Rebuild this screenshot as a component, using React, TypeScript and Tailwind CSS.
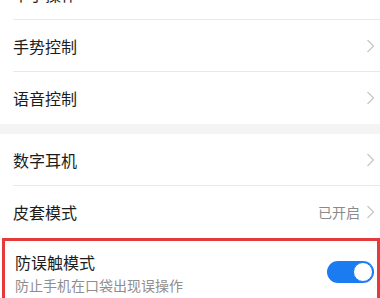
const FONT = { fontFamily: '"Noto Sans CJK SC", "Noto Sans", sans-serif' };

function Chevron() {
  return (
    <svg width="9" height="16" viewBox="0 0 9 16" className="shrink-0">
      <polyline points="1.5,2 7.5,8 1.5,14" fill="none" stroke="#c8c8c8" strokeWidth="1.3" />
    </svg>
  );
}

function Row({ label, value, last }: { label: string; value?: string; last?: boolean }) {
  return (
    <div className="pl-[13px]">
      <div className={`flex h-[52px] items-center pr-[5px] ${last ? "" : "border-b border-[#e9e9e9]"}`}>
        <span className="flex-1 text-[16px] text-[#1c1c1c]">{label}</span>
        {value && <span className="mr-[6px] text-[14px] text-[#8a8a8a]">{value}</span>}
        <Chevron />
      </div>
    </div>
  );
}

export default function App() {
  return (
    <div className="h-[298px] w-[380px] overflow-hidden bg-white" style={FONT}>
      <div className="-mt-[32px]">
        <Row label="单手操作" />
        <Row label="手势控制" />
        <Row label="语音控制" last />
      </div>
      <div className="h-[10px] bg-[#f4f4f4]" />
      <Row label="数字耳机" />
      <Row label="皮套模式" value="已开启" last />
      <div className="ml-[2px] flex h-[70px] items-start border-[3px] border-b-0 border-[#e5393b] pl-[10px] pr-[3px]">
        <div className="flex flex-1 flex-col pt-[9px]">
          <span className="text-[16px] leading-[24px] text-[#1c1c1c]">防误触模式</span>
          <span className="mt-[1px] text-[14px] leading-[20px] text-[#8e8e8e]">防止手机在口袋出现误操作</span>
        </div>
        <div className="mt-[20px] flex h-[22px] w-[47px] items-center justify-end rounded-full bg-[#1a7cf0] pr-[1px]">
          <div className="h-[20px] w-[20px] rounded-full border-[1px] border-[#1a7cf0] bg-white" />
        </div>
      </div>
    </div>
  );
}
